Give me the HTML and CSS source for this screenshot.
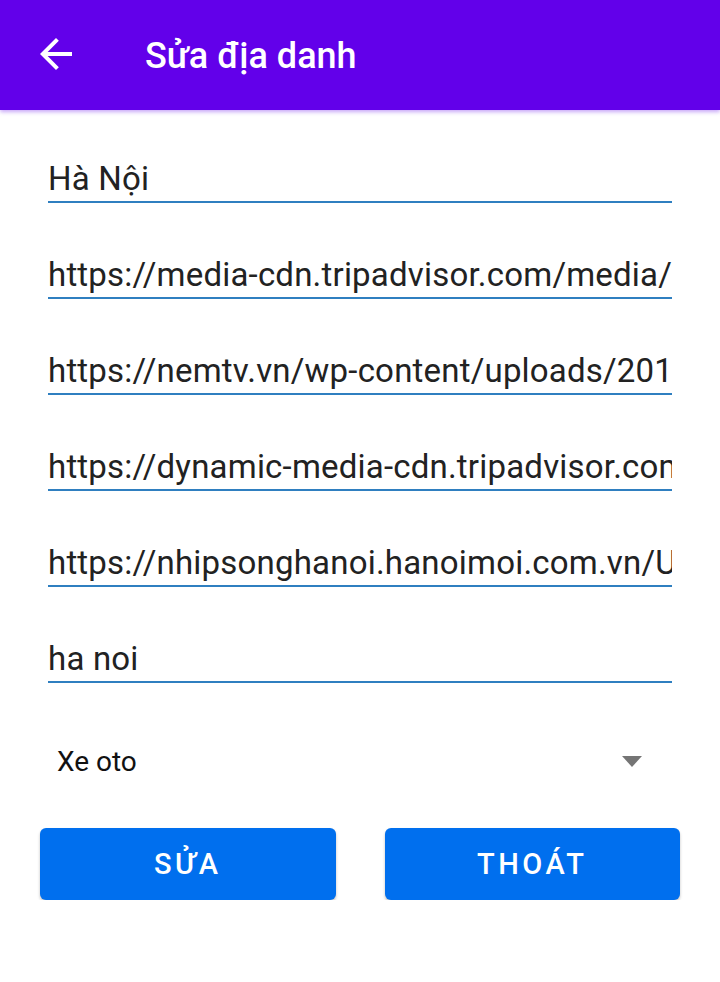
FILE: index.html
```html
<!DOCTYPE html>
<html lang="vi">
<head>
<meta charset="utf-8">
<title>Sửa địa danh</title>
<link rel="stylesheet" href="styles.css">
</head>
<body>
<header class="appbar">
  <svg class="back" viewBox="0 0 24 24" width="48" height="48" aria-hidden="true">
    <path d="M20 11H7.83l5.59-5.59L12 4l-8 8 8 8 1.41-1.41L7.83 13H20v-2z" fill="#ffffff"/>
  </svg>
  <h1 class="title">Sửa địa danh</h1>
</header>
<main class="form">
  <div class="field"><span class="value">Hà Nội</span></div>
  <div class="field"><span class="value">https://media-cdn.tripadvisor.com/media/photo-s/hanoi.jpg</span></div>
  <div class="field"><span class="value">https://nemtv.vn/wp-content/uploads/2019/01/hanoi.jpg</span></div>
  <div class="field"><span class="value">https://dynamic-media-cdn.tripadvisor.com/media/hanoi.jpg</span></div>
  <div class="field"><span class="value">https://nhipsonghanoi.hanoimoi.com.vn/Uploads/hanoi.jpg</span></div>
  <div class="field"><span class="value">ha noi</span></div>
  <div class="spinner">
    <span class="spinner-text">Xe oto</span>
    <span class="caret"></span>
  </div>
  <div class="actions">
    <button class="btn">SỬA</button>
    <button class="btn">THOÁT</button>
  </div>
</main>
</body>
</html>
```
FILE: styles.css
```css
* { box-sizing: border-box; }
html, body {
  margin: 0;
  padding: 0;
  background: #ffffff;
  font-family: Roboto, "Noto Sans", "Liberation Sans", sans-serif;
}
.appbar {
  height: 110px;
  background: #6200ea;
  display: flex;
  align-items: center;
  box-shadow: 0 2px 4px rgba(98, 0, 234, 0.35);
  position: relative;
}
.back {
  margin-left: 32px;
  margin-top: -2px;
  flex: none;
}
.title {
  margin: 0 0 0 65px;
  color: #ffffff;
  font-size: 36px;
  font-weight: 500;
  line-height: 40px;
  margin-top: 2px;
}
.form {
  padding: 0 48px;
  display: flex;
  flex-direction: column;
  gap: 3px;
}
.field {
  height: 93px;
  border-bottom: 2px solid #2f7fc0;
  display: flex;
  align-items: flex-end;
  padding-bottom: 2px;
  overflow: hidden;
}
.value {
  display: block;
  white-space: nowrap;
  overflow: hidden;
  font-size: 33px;
  letter-spacing: 0.2px;
  line-height: 40px;
  color: #222222;
}
.spinner {
  margin-top: 33px;
  height: 84px;
  display: flex;
  align-items: center;
  justify-content: space-between;
  padding: 0 30px 0 9px;
}
.spinner-text {
  font-size: 28px;
  color: #111111;
}
.caret {
  width: 0;
  height: 0;
  border-left: 10px solid transparent;
  border-right: 10px solid transparent;
  border-top: 11px solid #757575;
}
.actions {
  margin: 22px -8px 0 -8px;
  display: flex;
  gap: 49px;
}
.btn {
  flex: 1;
  height: 72px;
  border: none;
  border-radius: 6px;
  background: #006fee;
  color: #ffffff;
  font-family: Roboto, "Noto Sans", sans-serif;
  font-size: 29px;
  font-weight: 500;
  letter-spacing: 3.5px;
  box-shadow: 0 2px 3px rgba(0, 0, 0, 0.25);
}
```
